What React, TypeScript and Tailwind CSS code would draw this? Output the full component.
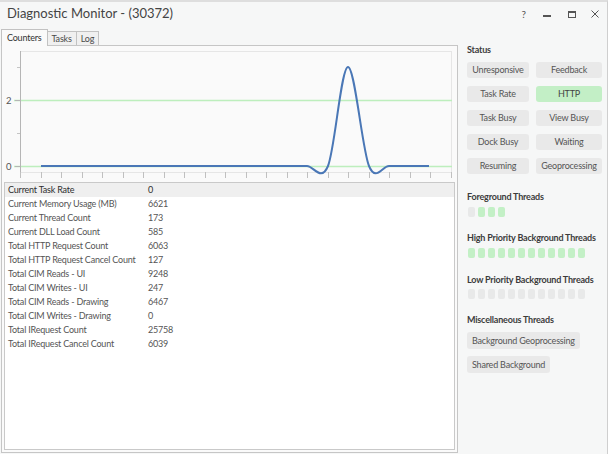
import React from 'react';

const counters: [string, string][] = [
  ['Current Task Rate', '0'],
  ['Current Memory Usage (MB)', '6621'],
  ['Current Thread Count', '173'],
  ['Current DLL Load Count', '585'],
  ['Total HTTP Request Count', '6063'],
  ['Total HTTP Request Cancel Count', '127'],
  ['Total CIM Reads - UI', '9248'],
  ['Total CIM Writes - UI', '247'],
  ['Total CIM Reads - Drawing', '6467'],
  ['Total CIM Writes - Drawing', '0'],
  ['Total IRequest Count', '25758'],
  ['Total IRequest Cancel Count', '6039'],
];

const statusButtons: { label: string; active?: boolean }[] = [
  { label: 'Unresponsive' },
  { label: 'Feedback' },
  { label: 'Task Rate' },
  { label: 'HTTP', active: true },
  { label: 'Task Busy' },
  { label: 'View Busy' },
  { label: 'Dock Busy' },
  { label: 'Waiting' },
  { label: 'Resuming' },
  { label: 'Geoprocessing' },
];

const ThreadRow: React.FC<{ states: boolean[] }> = ({ states }) => (
  <div className="flex gap-[3px] pl-[1px]">
    {states.map((on, i) => (
      <div
        key={i}
        className={on ? 'w-[7px] h-[10px] rounded-[2px] bg-[#c3f0c6]' : 'w-[7px] h-[10px] rounded-[2px] bg-[#e8e9e9]'}
      />
    ))}
  </div>
);

const Chart: React.FC = () => {
  const ticks: number[] = [];
  for (let i = 0; i <= 21; i++) ticks.push(20 + i * 20.52);
  return (
    <svg width={455} height={136} viewBox="2 46 455 136" className="block">
      {/* plot frame */}
      <rect x={20.5} y={51.5} width={431} height={121} fill="#fafafa" stroke="#e6e6e6" />
      {/* threshold lines */}
      <line x1={14} y1={100.5} x2={452} y2={100.5} stroke="#bdeebd" strokeWidth={1.5} />
      <line x1={14} y1={166.5} x2={452} y2={166.5} stroke="#bdeebd" strokeWidth={1.5} />
      {/* y axis */}
      <line x1={20.5} y1={51} x2={20.5} y2={173} stroke="#b5b5b5" />
      <line x1={15} y1={100.5} x2={20} y2={100.5} stroke="#b5b5b5" />
      <line x1={15} y1={166.5} x2={20} y2={166.5} stroke="#b5b5b5" />
      <line x1={17} y1={67.5} x2={20} y2={67.5} stroke="#c5c5c5" />
      <line x1={17} y1={133.5} x2={20} y2={133.5} stroke="#c5c5c5" />
      <text x={6} y={103.5} fontSize={9.5} fill="#555" fontFamily="Lato, sans-serif">2</text>
      <text x={6} y={169.5} fontSize={9.5} fill="#555" fontFamily="Lato, sans-serif">0</text>
      {/* x ticks */}
      {ticks.map((x, i) => (
        <line key={i} x1={Math.round(x) + 0.5} y1={172} x2={Math.round(x) + 0.5} y2={178} stroke="#c0c0c0" />
      ))}
      {/* series */}
      <path
        d="M41,166 L307,166 C313.8,166 321.2,182.5 328,166 C334.8,149.5 341.2,67 348,67 C354.8,67 362.2,149.5 369,166 C375.8,182.5 382.2,166 389,166 L429,166"
        fill="none"
        stroke="#4a77b6"
        strokeWidth={2}
      />
    </svg>
  );
};

export default function App() {
  return (
    <div className="w-[608px] h-[454px] bg-[#f6f7f7] border-t-2 border-[#dedede] border-r border-r-[#cfcfcf] font-[Lato,sans-serif] text-[#4a4a4a] flex flex-col overflow-hidden">
      {/* Title bar */}
      <div className="h-[24px] flex items-center justify-between pl-[7px] pr-[8px] shrink-0">
        <span className="text-[13px] text-[#444]">Diagnostic Monitor - (30372)</span>
        <div className="flex items-center text-[#555]">
          <span className="text-[10px] leading-none">?</span>
          <span className="w-[8px] h-[2px] bg-[#555] mt-[3px] ml-[17px]" />
          <span className="w-[8px] h-[7px] border border-[#555] border-t-2 ml-[17px]" />
          <svg width={8} height={8} viewBox="0 0 8 8" className="ml-[15px]">
            <path d="M0.5,0.5 L7.5,7.5 M7.5,0.5 L0.5,7.5" stroke="#555" strokeWidth={1} />
          </svg>
        </div>
      </div>

      <div className="flex flex-1 min-h-0">
        {/* Left side */}
        <div className="w-[458px] pl-[1px] flex flex-col pb-[1px]">
          {/* Tabs */}
          <div className="flex items-end h-[18px] mt-[1px] text-[9px] tracking-[-0.2px] relative z-10">
            <div className="h-[17px] px-[5px] border border-b-0 border-[#c2c2c2] bg-[#fafafa] flex items-center text-[#333] mb-[-1px] pb-[1px]">
              Counters
            </div>
            <div className="h-[14px] px-[4px] border border-l-0 border-b-0 border-[#c2c2c2] bg-[#f0f0f0] flex items-center">
              Tasks
            </div>
            <div className="h-[14px] px-[4px] border border-l-0 border-b-0 border-[#c2c2c2] bg-[#f0f0f0] flex items-center">
              Log
            </div>
          </div>
          {/* Panel */}
          <div className="flex-1 border border-[#c6c6c6] bg-[#fafafa] flex flex-col">
            <Chart />
            <div className="flex-1 mx-[2px] mb-[2px] border border-[#c9c9c9] bg-white text-[9px] tracking-[-0.2px] whitespace-nowrap">
              {counters.map(([name, value], i) => (
                <div
                  key={name}
                  className={
                    i === 0
                      ? 'h-[14px] flex items-center bg-[#efefef] text-[#2e2e2e]'
                      : 'h-[14px] flex items-center text-[#555]'
                  }
                >
                  <span className="w-[143px] pl-[3px]">{name}</span>
                  <span>{value}</span>
                </div>
              ))}
            </div>
          </div>
        </div>

        {/* Right side */}
        <div className="flex-1 pl-[9px] pt-[17px] text-[9px] tracking-[-0.2px] whitespace-nowrap">
          <div className="font-bold text-[#3c3c3c] h-[14px] flex items-center">Status</div>
          <div className="grid grid-cols-[62px_66px] gap-x-[7px] gap-y-[8px] mt-[5px]">
            {statusButtons.map((b) => (
              <div
                key={b.label}
                className={
                  b.active
                    ? 'h-[16px] rounded-[3px] bg-[#c3efc6] flex items-center justify-center text-[#444]'
                    : 'h-[16px] rounded-[3px] bg-[#e9e9e9] flex items-center justify-center text-[#555]'
                }
              >
                {b.label}
              </div>
            ))}
          </div>

          <div className="font-bold text-[#3c3c3c] h-[14px] flex items-center mt-[16px]">Foreground Threads</div>
          <div className="mt-[3px]">
            <ThreadRow states={[false, true, true, true]} />
          </div>

          <div className="font-bold text-[#3c3c3c] h-[14px] flex items-center mt-[14px]">High Priority Background Threads</div>
          <div className="mt-[3px]">
            <ThreadRow states={Array(12).fill(true)} />
          </div>

          <div className="font-bold text-[#3c3c3c] h-[14px] flex items-center mt-[15px]">Low Priority Background Threads</div>
          <div className="mt-[2px]">
            <ThreadRow states={Array(12).fill(false)} />
          </div>

          <div className="font-bold text-[#3c3c3c] h-[14px] flex items-center mt-[14px]">Miscellaneous Threads</div>
          <div className="flex flex-col items-start gap-[7px] mt-[5px]">
            <div className="h-[17px] px-[5px] rounded-[3px] bg-[#e9e9e9] flex items-center text-[#555]">
              Background Geoprocessing
            </div>
            <div className="h-[17px] px-[5px] rounded-[3px] bg-[#e9e9e9] flex items-center text-[#555]">
              Shared Background
            </div>
          </div>
        </div>
      </div>
    </div>
  );
}
